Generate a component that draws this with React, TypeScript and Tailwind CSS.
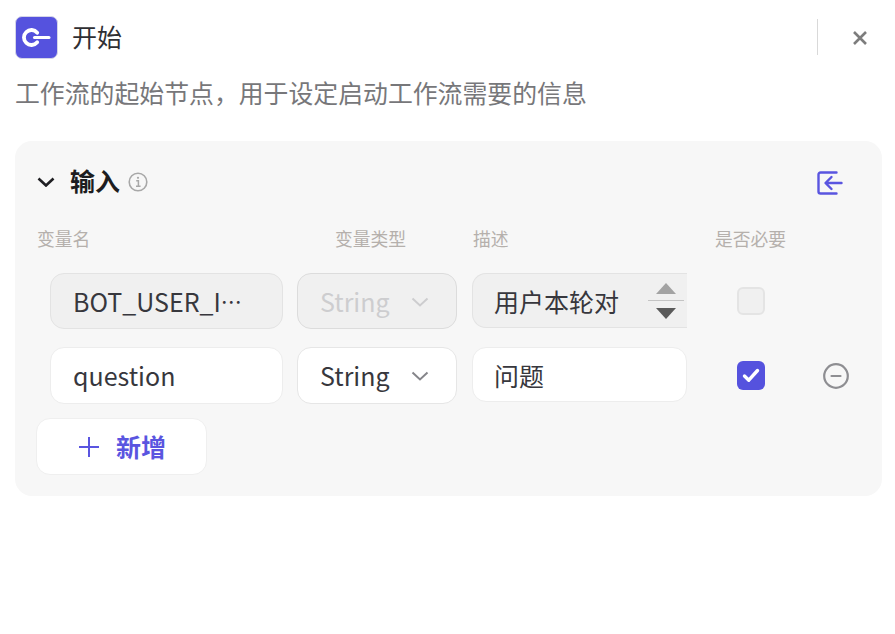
import type { ReactNode } from 'react'

const font = { fontFamily: '"Noto Sans CJK SC", "Noto Sans", sans-serif' }

function Logo() {
  return (
    <div className="w-[43px] h-[43px] rounded-[7px] bg-[#5552de] border border-[#d5d5e8] overflow-hidden">
      <svg width="41" height="41" viewBox="0 0 41 41" fill="none" stroke="#fff" strokeLinecap="round">
        <path d="M21.2 15.7A7.5 7.5 0 1 0 21.2 25.3" strokeWidth="3.8" />
        <path d="M18.5 20.5H33" strokeWidth="3" />
      </svg>
    </div>
  )
}

function Chevron({ color, width = 2 }: { color: string; width?: number }) {
  return (
    <svg width="18" height="10" viewBox="0 0 18 10" fill="none" stroke={color} strokeWidth={width}>
      <path d="M1.5 1.5L9 8.5L16.5 1.5" />
    </svg>
  )
}

function Stepper() {
  return (
    <div className="absolute right-[2px] top-[9px] w-[38px] flex flex-col items-center">
      <div className="w-0 h-0 border-x-[10px] border-x-transparent border-b-[11px] border-b-[#a3a3a3]" />
      <div className="w-[36px] h-px bg-[#c4c4c4] mt-[6px]" />
      <div className="w-0 h-0 border-x-[10px] border-x-transparent border-t-[11px] border-t-[#5a5a5a] mt-[7px]" />
    </div>
  )
}

function Row({ disabled, name, desc, height, children }: { disabled?: boolean; name: ReactNode; desc: string; height: string; children: ReactNode }) {
  return (
    <div className="flex items-center pl-[35px]">
      <div className={`w-[233px] ${height} pt-[1px] rounded-[14px] border flex items-center pl-[22px] text-[25px] text-[#37373d] ${disabled ? 'bg-[#f0f0f0] border-[#e3e3e3]' : 'bg-white border-[#ededed]'}`}>
        {name}
      </div>
      <div className={`ml-[14px] w-[160px] ${height} pt-[1px] rounded-[14px] border flex items-center justify-between pl-[22px] pr-[27px] text-[25px] ${disabled ? 'bg-[#f0f0f0] border-[#dcdcdc] text-[#cdcdcf]' : 'bg-white border-[#e6e6e6] text-[#37373d]'}`}>
        String
        <Chevron color={disabled ? '#cdcdcf' : '#85858a'} />
      </div>
      <div className={`ml-[15px] w-[215px] h-[55px] self-start pt-[3px] rounded-[14px] border flex items-center pl-[21px] relative text-[25px] text-[#37373d] ${disabled ? 'bg-[#f0f0f0] border-[#e3e3e3] border-r-0 rounded-r-none' : 'bg-white border-[#ededed]'}`}>
        {desc}
        {disabled && <Stepper />}
      </div>
      {children}
    </div>
  )
}

export default function App() {
  return (
    <div className="w-[895px] h-[634px] bg-white px-[15px] pt-[16px]" style={font}>
      <div className="flex items-center h-[43px]">
        <Logo />
        <span className="ml-[14px] text-[25px] leading-[40px] -mt-[4px] text-[#2f2f33]">开始</span>
        <div className="ml-auto w-px h-[36px] -mt-[1px] bg-[#d9d9d9]" />
        <svg className="ml-[35px] mr-[13px]" width="14" height="14" viewBox="0 0 14 14" stroke="#7d7d7d" strokeWidth="2.6">
          <path d="M1 1L13 13M13 1L1 13" />
        </svg>
      </div>
      <p className="mt-[15px] text-[24.87px] leading-[36px] text-[#77777a]">工作流的起始节点，用于设定启动工作流需要的信息</p>
      <div className="mt-[31px] w-[867px] h-[355px] rounded-[17px] bg-[#f7f7f7] pt-[20px]">
        <div className="flex items-center h-[41px] pl-[22px]">
          <Chevron color="#1f1f23" width={2.6} />
          <span className="ml-[15px] -mt-[1px] text-[25px] font-semibold text-[#1d1d20]">输入</span>
          <svg className="ml-[8px]" width="20" height="20" viewBox="0 0 20 20" fill="none" stroke="#a8a8a8">
            <circle cx="10" cy="10" r="8.8" strokeWidth="1.6" />
            <path d="M8.2 8.8H10.4V14M8 14.2H12.6" strokeWidth="1.5" />
            <circle cx="10" cy="5.8" r="1.1" fill="#a8a8a8" stroke="none" />
          </svg>
          <svg className="ml-auto mr-[39px] mt-[2px]" width="26" height="24" viewBox="0 0 26 24" fill="none" stroke="#5a55e0" strokeWidth="2.4" strokeLinecap="round" strokeLinejoin="round">
            <path d="M19.5 1.5H3.5a2 2 0 0 0-2 2v17a2 2 0 0 0 2 2H19.5" />
            <path d="M24.5 12H9M14.5 6L8.5 12L14.5 18" />
          </svg>
        </div>
        <div className="flex items-center mt-[24px] h-[24px] pl-[22px] text-[17.8px] text-[#b5b0ac]">
          <span className="w-[298px]">变量名</span>
          <span className="w-[138px]">变量类型</span>
          <span className="w-[242px]">描述</span>
          <span>是否必要</span>
        </div>
        <div className="mt-[23px] flex flex-col gap-[18px]">
          <Row disabled name={<>BOT_USER_I<span className="text-[21px]">⋯</span></>} desc="用户本轮对" height="h-[56px]">
            <div className="ml-[50px] w-[28px] h-[28px] rounded-[6px] bg-[#f0f0f0] border-2 border-[#e4e4e4]" />
          </Row>
          <Row name="question" desc="问题" height="h-[57px]">
            <div className="ml-[50px] w-[28px] h-[29px] rounded-[6px] bg-[#5552de] flex items-center justify-center">
              <svg width="18" height="15" viewBox="0 0 18 15" fill="none" stroke="#fff" strokeWidth="3.4" strokeLinecap="round" strokeLinejoin="round">
                <path d="M2.5 8L6.8 12.2L15.5 2.5" />
              </svg>
            </div>
            <svg className="ml-[58px]" width="26" height="26" viewBox="0 0 26 26" fill="none" stroke="#8e8e92" strokeWidth="2.2">
              <circle cx="13" cy="13" r="11.8" />
              <path d="M8.5 13H17.5" strokeLinecap="round" />
            </svg>
          </Row>
        </div>
        <div className="ml-[21px] mt-[14px] w-[171px] h-[57px] rounded-[14px] bg-white border border-[#efefef] flex items-center pl-[41px]">
          <svg width="22" height="22" viewBox="0 0 22 22" stroke="#5a55e0" strokeWidth="2">
            <path d="M11 1V21M1 11H21" />
          </svg>
          <span className="ml-[16px] text-[25px] font-semibold text-[#5a55e0]">新增</span>
        </div>
      </div>
    </div>
  )
}
